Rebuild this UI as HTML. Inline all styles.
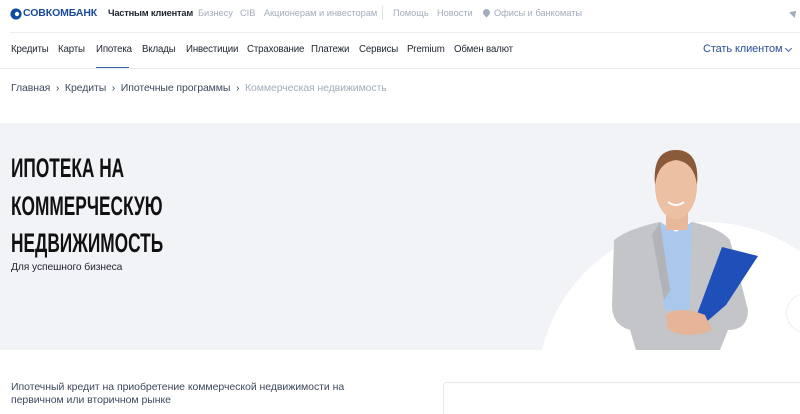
<!DOCTYPE html>
<html><head><meta charset="utf-8"><style>
*{margin:0;padding:0;box-sizing:border-box}
html,body{width:800px;height:414px;overflow:hidden}
body{background:#fff;font-family:"Liberation Sans",sans-serif;position:relative}
.a{position:absolute;white-space:nowrap}
.top{font-size:9.3px;color:#a3acbb;top:8px;letter-spacing:-.05px}
.nav{font-size:9.7px;color:#1f2530;top:44px;letter-spacing:-.15px}
.bc{font-size:10.5px;color:#3e4a5e;top:82px;letter-spacing:-.1px}
.h{font-family:"Liberation Sans Narrow","Liberation Sans",sans-serif;font-weight:bold;font-size:27px;line-height:31px;color:#111;transform-origin:0 0;transform:scaleX(0.64)}
</style></head><body>
<svg class="a" style="left:10px;top:8px" width="12" height="12" viewBox="0 0 12 12"><circle cx="6" cy="6" r="5.5" fill="#e6332a"/><path d="M6 .5A5.5 5.5 0 0 1 6 11.5 3.5 3.5 0 0 1 6 .5z" fill="#0a4ea2"/><circle cx="7" cy="6" r="2.2" fill="#fff"/></svg>
<div class="a" style="left:23px;top:7px;font-size:10.5px;font-weight:bold;color:#1b4a9c;letter-spacing:-.1px">СОВКОМБАНК</div>
<div class="a top" style="left:108px;color:#1f2530;font-weight:bold;letter-spacing:-.2px">Частным клиентам</div>
<div class="a top" style="left:198px">Бизнесу</div>
<div class="a top" style="left:240px">CIB</div>
<div class="a top" style="left:264px">Акционерам и инвесторам</div>
<div class="a" style="left:382px;top:6px;width:1px;height:14px;background:#dde1e7"></div>
<div class="a top" style="left:393px">Помощь</div>
<div class="a top" style="left:437px">Новости</div>
<div class="a" style="left:483px;top:9px;width:7px;height:7px;background:#a3acbb;border-radius:50% 50% 50% 0;transform:rotate(-45deg)"></div>
<div class="a top" style="left:494px">Офисы и банкоматы</div>
<div class="a" style="left:790px;top:10px;width:0;height:0;border-left:4px solid transparent;border-right:4px solid transparent;border-bottom:6px solid #a3acbb;transform:rotate(45deg)"></div>
<div class="a" style="left:10px;top:32px;width:790px;height:1px;background:#eceef2"></div>
<div class="a nav" style="left:11px">Кредиты</div>
<div class="a nav" style="left:58px">Карты</div>
<div class="a nav" style="left:96px">Ипотека</div>
<div class="a" style="left:96px;top:67px;width:33px;height:2px;background:#3b5fa6"></div>
<div class="a nav" style="left:142px">Вклады</div>
<div class="a nav" style="left:186px">Инвестиции</div>
<div class="a nav" style="left:247px">Страхование</div>
<div class="a nav" style="left:311px">Платежи</div>
<div class="a nav" style="left:359px">Сервисы</div>
<div class="a nav" style="left:407px">Premium</div>
<div class="a nav" style="left:454px">Обмен валют</div>
<div class="a" style="left:703px;top:43px;font-size:11px;color:#2a4f9a;letter-spacing:-.1px">Стать клиентом</div>
<div class="a" style="left:786px;top:46px;width:5px;height:5px;border-right:1px solid #3b5fa6;border-bottom:1px solid #3b5fa6;transform:rotate(45deg)"></div>
<div class="a" style="left:0;top:68px;width:800px;height:1px;background:#eceef2"></div>
<div class="a bc" style="left:11px">Главная &nbsp;›&nbsp; Кредиты &nbsp;›&nbsp; Ипотечные программы &nbsp;›&nbsp; <span style="color:#a3acbb">Коммерческая недвижимость</span></div>
<div class="a" style="left:0;top:123px;width:800px;height:227px;background:#f2f3f7;overflow:hidden">
<div class="a" style="left:537px;top:99px;width:336px;height:336px;border-radius:50%;background:#fff"></div>
<div class="a" style="left:544px;top:244px;width:17px;height:17px;border-radius:50%;background:#fff"></div>
<div class="a" style="left:536px;top:236px;width:5px;height:5px;border-radius:50%;background:#fff"></div>
<div class="a" style="left:786px;top:170px;width:40px;height:40px;border-radius:50%;background:#fff;border:1px solid #eee"></div>
<svg class="a" style="left:600px;top:0" width="200" height="227" viewBox="600 123 200 227">
<path d="M614 240 Q630 228 660 222 L676 232 L692 222 Q720 228 730 240 L748 310 Q748 330 728 330 L720 350 L636 350 L630 330 Q612 325 612 305 Z" fill="#c4c5c8"/>
<path d="M660 222 L676 232 L692 222 L690 310 L664 310 Z" fill="#a9c8ec"/>
<path d="M660 222 L670 290 L664 300 L652 235 Z" fill="#b2b3b6"/>
<rect x="666" y="205" width="22" height="25" fill="#e8b89a"/>
<ellipse cx="676" cy="186" rx="21" ry="33" fill="#ecc0a3"/>
<path d="M655 185 Q652 150 676 150 Q700 150 697 185 Q694 162 676 160 Q658 162 655 185Z" fill="#8a5a3a"/>
<path d="M668 202 Q676 208 684 202" stroke="#fff" stroke-width="2" fill="none"/>
<path d="M722 247 L758 256 L726 305 L697 330 L693 325 Z" fill="#1f4fb8"/>
<path d="M666 315 Q680 305 705 315 L712 330 Q690 340 668 330 Z" fill="#e6b497"/>
</svg>
<div class="a h" style="left:11px;top:30px">ИПОТЕКА НА</div>
<div class="a h" style="left:11px;top:68px">КОММЕРЧЕСКУЮ</div>
<div class="a h" style="left:11px;top:105px">НЕДВИЖИМОСТЬ</div>
<div class="a" style="left:11px;top:139px;font-size:10.3px;color:#1f2530;letter-spacing:-.1px">Для успешного бизнеса</div>
</div>
<div class="a" style="left:11px;top:381px;font-size:10.5px;color:#3e4a5e;line-height:13px;letter-spacing:-.05px">Ипотечный кредит на приобретение коммерческой недвижимости на<br>первичном или вторичном рынке</div>
<div class="a" style="left:443px;top:382px;width:357px;height:32px;border:1px solid #e6e8ec;border-bottom:none;border-right:none;border-radius:4px 0 0 0"></div>
</body></html>
